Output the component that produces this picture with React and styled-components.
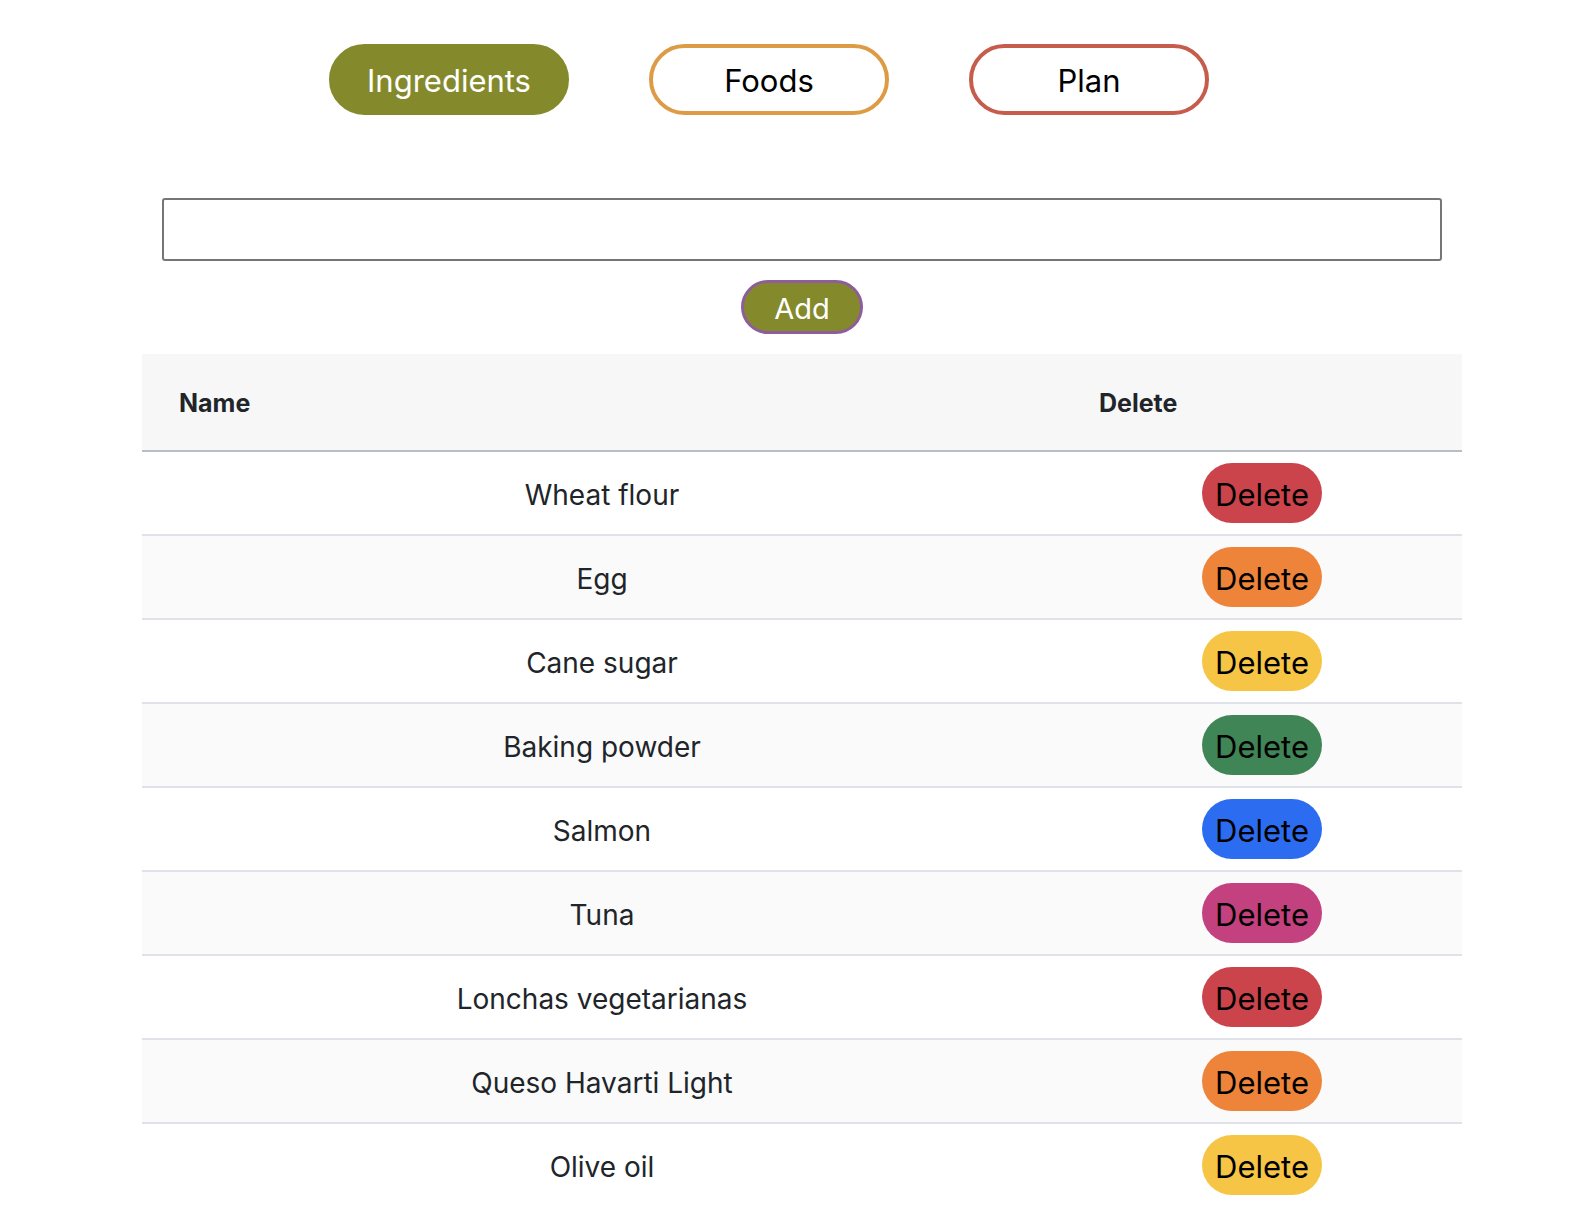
import React, { useState } from "react";
import styled, { createGlobalStyle } from "styled-components";

const GlobalStyle = createGlobalStyle`
  html, body { margin: 0; padding: 0; background: #ffffff; }
  body { font-family: Inter, "Noto Sans", "Liberation Sans", sans-serif; color: #212529; }
  * { box-sizing: border-box; }
`;

const Nav = styled.nav`
  display: flex;
  gap: 80px;
  padding: 44px 0 0 329px;
`;

const NavButton = styled.button`
  width: 240px;
  height: 71px;
  border-radius: 36px;
  border: 4px solid ${(p) => p.$color};
  background: ${(p) => (p.$active ? p.$color : "#ffffff")};
  color: ${(p) => (p.$active ? "#ffffff" : "#000000")};
  font-family: Inter, "Liberation Sans", sans-serif;
  font-size: 31px;
  font-weight: 400;
  padding: 2px 0 0;
  cursor: pointer;
`;

const Container = styled.main`
  width: 1320px;
  margin: 83px 0 0 142px;
  display: flex;
  flex-direction: column;
  align-items: center;
`;

const TextInput = styled.input`
  width: 1280px;
  height: 63px;
  border: 2px solid #767676;
  border-radius: 3px;
  font-size: 28px;
  padding: 0 12px;
  font-family: Inter, "Liberation Sans", sans-serif;
`;

const AddButton = styled.button`
  margin-top: 19px;
  width: 122px;
  height: 54px;
  border-radius: 27px;
  border: 3px solid #8e5e9a;
  background: #848a2c;
  color: #ffffff;
  font-family: Inter, "Liberation Sans", sans-serif;
  font-size: 29px;
  padding: 2px 0 0;
  cursor: pointer;
`;

const Table = styled.table`
  margin-top: 20px;
  width: 1320px;
  border-collapse: collapse;
  table-layout: fixed;
`;

const HeadCell = styled.th`
  background: #f7f7f7;
  height: 97px;
  padding: 2px 0 0 37px;
  text-align: left;
  font-family: Inter, "Liberation Sans", sans-serif;
  font-size: 25px;
  font-weight: 700;
  color: #212529;
  border-bottom: 2px solid #b9bdc4;
  width: ${(p) => p.$width};
`;

const Row = styled.tr`
  background: ${(p) => (p.$striped ? "#fafafa" : "#ffffff")};
  border-bottom: 2px solid #dfe2e8;
`;

const Cell = styled.td`
  height: 84px;
  padding: ${(p) => (p.$text ? "3px 0 0" : "0")};
  text-align: center;
  vertical-align: middle;
  font-family: Inter, "Liberation Sans", sans-serif;
  font-size: 28px;
  color: #212529;
`;

const DeleteButton = styled.button`
  width: 120px;
  height: 60px;
  border-radius: 30px;
  border: none;
  background: ${(p) => p.$color};
  color: #000000;
  font-family: Inter, "Liberation Sans", sans-serif;
  font-size: 31px;
  padding: 2px 0 0;
  vertical-align: middle;
  cursor: pointer;
`;

const COLORS = ["#cb444b", "#ee843a", "#f6c545", "#408556", "#2c6cf0", "#c3417e"];

const INGREDIENTS = [
  "Wheat flour",
  "Egg",
  "Cane sugar",
  "Baking powder",
  "Salmon",
  "Tuna",
  "Lonchas vegetarianas",
  "Queso Havarti Light",
  "Olive oil",
];

export default function App() {
  const [value, setValue] = useState("");
  return (
    <>
      <GlobalStyle />
      <Nav>
        <NavButton $color="#848a2c" $active>Ingredients</NavButton>
        <NavButton $color="#dd9b45">Foods</NavButton>
        <NavButton $color="#c65c4b">Plan</NavButton>
      </Nav>
      <Container>
        <TextInput value={value} onChange={(e) => setValue(e.target.value)} />
        <AddButton>Add</AddButton>
        <Table>
          <thead>
            <tr>
              <HeadCell $width="920px">Name</HeadCell>
              <HeadCell $width="400px">Delete</HeadCell>
            </tr>
          </thead>
          <tbody>
            {INGREDIENTS.map((name, i) => (
              <Row key={name} $striped={i % 2 === 1}>
                <Cell $text>{name}</Cell>
                <Cell>
                  <DeleteButton $color={COLORS[i % COLORS.length]}>Delete</DeleteButton>
                </Cell>
              </Row>
            ))}
          </tbody>
        </Table>
      </Container>
    </>
  );
}
